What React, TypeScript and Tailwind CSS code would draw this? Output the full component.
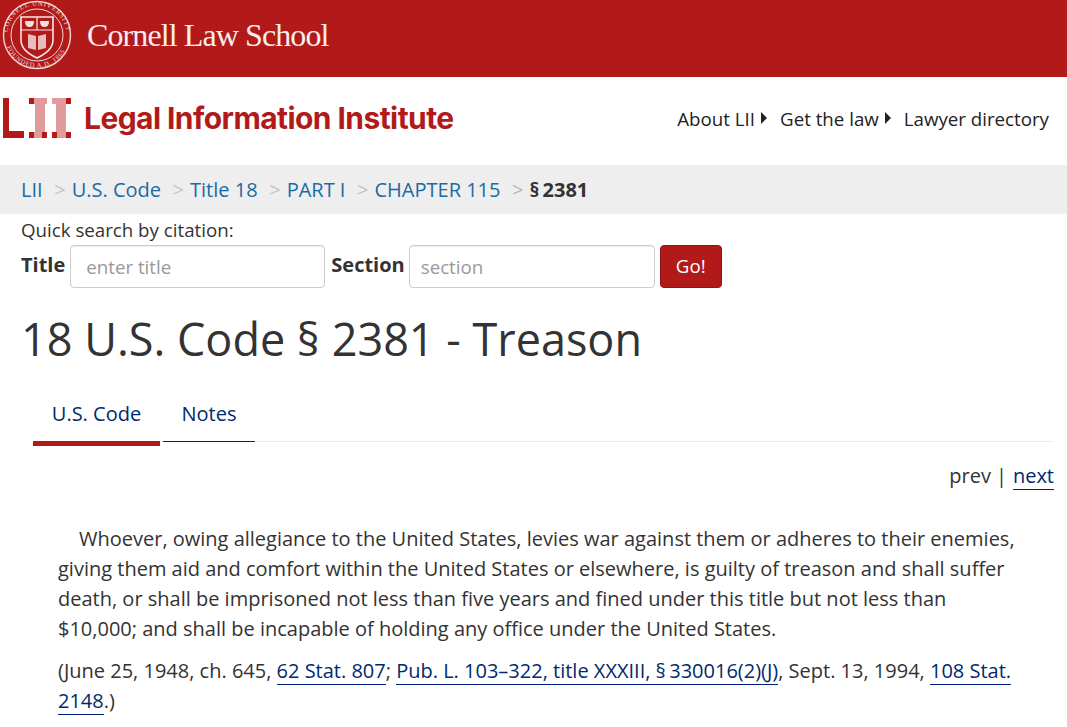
import React from 'react';

const Seal = () => (
  <svg width="70" height="70" viewBox="0 0 70 70" className="shrink-0 ml-[2px] self-start mt-[0px]" fill="none">
    <defs>
      <path id="sealTop" d="M5.500 35a29.500 29.500 0 0 1 59 0" />
      <path id="sealBottom" d="M2.500 35a32.500 32.500 0 0 0 65 0" />
    </defs>
    <circle cx="35" cy="35" r="33.500" stroke="#f1d9d9" strokeWidth="1.400" />
    <circle cx="35" cy="35" r="26" stroke="#f1d9d9" strokeWidth="1" />
    <text fontSize="6.500" fill="#f3dede" fontFamily="'Liberation Serif', serif" letterSpacing="0.9">
      <textPath href="#sealTop" startOffset="3%">CORNELL UNIVERSITY</textPath>
    </text>
    <text fontSize="6.500" fill="#f3dede" fontFamily="'Liberation Serif', serif" letterSpacing="0.8">
      <textPath href="#sealBottom" startOffset="12%">FOUNDED A.D. 1865</textPath>
    </text>
    <path d="M19 17h32v23c0 9-8 14-16 18-8-4-16-9-16-18z" stroke="#f6e6e6" strokeWidth="1.600" fill="#b21a1a" />
    <path d="M19 30h32M35 17v13" stroke="#f6e6e6" strokeWidth="1.200" />
    <path d="M23 21h9c0 4-1.500 6-4.500 6s-4.500-2-4.500-6zM38 21h9c0 4-1.500 6-4.500 6s-4.500-2-4.500-6z" fill="#f3dede" />
    <path d="M26 34l8 2v14l-8-2zM44 34l-8 2v14l8-2z" fill="#e9bcbc" />
  </svg>
);

const LiiMark = () => (
  <svg width="68" height="40" viewBox="0 0 68 40" className="shrink-0 ml-[3px]">
    <path d="M0 0h6v33h15v7H0z" fill="#b21a1a" />
    {/* the two pale I's */}
    <path d="M26 0h18v6h-2v28h2v6H26v-6h6V6h-6z" fill="#e09c9c" />
    <path d="M49 0h19v6h-5v28h5v6H49v-6h4V6h-4z" fill="#e09c9c" />
    <rect x="26" y="0" width="5" height="6" fill="#b21a1a" />
    <rect x="26" y="34" width="5" height="6" fill="#b21a1a" />
    <rect x="39" y="34" width="5" height="6" fill="#b21a1a" />
    <rect x="49" y="34" width="5" height="6" fill="#b21a1a" />
    <rect x="63" y="0" width="5" height="6" fill="#b21a1a" />
    <rect x="63" y="34" width="5" height="6" fill="#b21a1a" />
  </svg>
);

const Caret = () => <span className="ml-[6px] mb-[1px] inline-block border-y-[6px] border-l-[6px] border-y-transparent border-l-[#222]" />;

const crumbs = ['U.S. Code', 'Title 18', 'PART I', 'CHAPTER 115'];

const Cite = ({ children }: { children: React.ReactNode }) => (
  <a className="text-[#002a6c] border-b border-[#00207d]">{children}</a>
);

const App = () => {
  return (
    <div className="w-[1067px] h-[727px] overflow-hidden bg-white text-[#333] font-['Open_Sans',sans-serif] text-[20px]">
      <div className="h-[77px] bg-[#b21a1a] flex items-center">
        <Seal />
        <span className="ml-[15px] -mt-[8px] text-[32px] tracking-[-0.9px] text-[#f9eeee] font-['Liberation_Serif',serif]">Cornell Law School</span>
      </div>

      <div className="h-[88px] flex items-center justify-between pr-[18px]">
        <div className="flex items-center gap-[13px] -mt-[7px]">
          <LiiMark />
          <span className="mt-[2px] text-[30px] font-bold text-[#b21a1a] font-['Inter',sans-serif] tracking-[-0.57px]">Legal Information Institute</span>
        </div>
        <div className="flex items-center text-[18.720px] text-[#222] -mt-[4px]">
          <span>About LII</span>
          <Caret />
          <span className="ml-[13px]">Get the law</span>
          <Caret />
          <span className="ml-[13px]">Lawyer directory</span>
        </div>
      </div>

      <div className="h-[49px] bg-[#eeeeee] flex items-center pl-[21px]">
        <span className="text-[#1a6aa5]">LII</span>
        {crumbs.map((c) => (
          <React.Fragment key={c}>
            <span className="ml-[11.600px] mr-[6px] text-[#c4c4c4]">&gt;</span>
            <span className="text-[#1a6aa5]">{c}</span>
          </React.Fragment>
        ))}
        <span className="ml-[11.600px] mr-[6px] text-[#b5b5b5]">&gt;</span>
        <span className="font-bold text-[#333]">§{'\u2009'}2381</span>
      </div>

      <div className="pl-[21px] pt-[2px]">
        <div className="text-[18.720px] leading-[28px] text-[#333]">Quick search by citation:</div>
        <div className="flex items-center mt-[1px]">
          <span className="font-bold mr-[5px] -mt-[4px]">Title</span>
          <div className="w-[255px] h-[43px] border border-[#ccc] rounded-[4px] flex items-center pl-[15px] pt-[1px] text-[18.720px] text-[#999] shadow-[inset_0_1px_1px_rgba(0,0,0,0.075)]">enter title</div>
          <span className="font-bold ml-[6px] mr-[4px] -mt-[4px]">Section</span>
          <div className="w-[246px] h-[43px] border border-[#ccc] rounded-[4px] flex items-center pl-[11px] pt-[1px] text-[18.720px] text-[#999] shadow-[inset_0_1px_1px_rgba(0,0,0,0.075)]">section</div>
          <button className="ml-[5px] w-[62px] h-[43px] rounded-[4px] bg-[#b21a1a] border border-[#8f1515] text-white text-[18.720px]">Go!</button>
        </div>
      </div>

      <h1 className="ml-[21px] mt-[22px] text-[45px] leading-[58px] font-normal text-[#333]">18 U.S. Code § 2381 - Treason</h1>

      <div className="ml-[33px] mr-[13px] mt-[16px] h-[58px] flex border-b border-[#eee] items-start">
        <div className="w-[127px] h-[62px] border-b-[5px] border-[#b21a1a] text-center text-[#002a6c] pt-[16px] leading-[27px]">U.S. Code</div>
        <div className="w-[92px] ml-[3px] h-[58px] -mb-px border-b border-[#00207d] text-center text-[#002a6c] pt-[16px] leading-[27px]">Notes</div>
      </div>

      <div className="flex justify-end pr-[13px] mt-[20px] leading-[27px]">
        <span>prev</span>
        <span className="ml-[5px] mr-[6px]">|</span>
        <a className="text-[#002a6c] border-b border-[#00207d]">next</a>
      </div>

      <div className="ml-[58px] mr-[50px] mt-[34px] leading-[30px]">
        <p className="indent-[21px]">Whoever, owing allegiance to the United States, levies war against them or adheres to their enemies, giving them aid and comfort within the United States or elsewhere, is guilty of treason and shall suffer death, or shall be imprisoned not less than five years and fined under this title but not less than $10,000; and shall be incapable of holding any office under the United States.</p>
        <p className="mt-[12px]">(June 25, 1948, ch. 645, <Cite>62 Stat. 807</Cite>; <Cite>Pub. L. 103–322, title XXXIII, §{'\u2009'}330016(2)(J)</Cite>, Sept. 13, 1994, <Cite>108 Stat. 2148</Cite>.)</p>
      </div>
    </div>
  );
};

export default App;
